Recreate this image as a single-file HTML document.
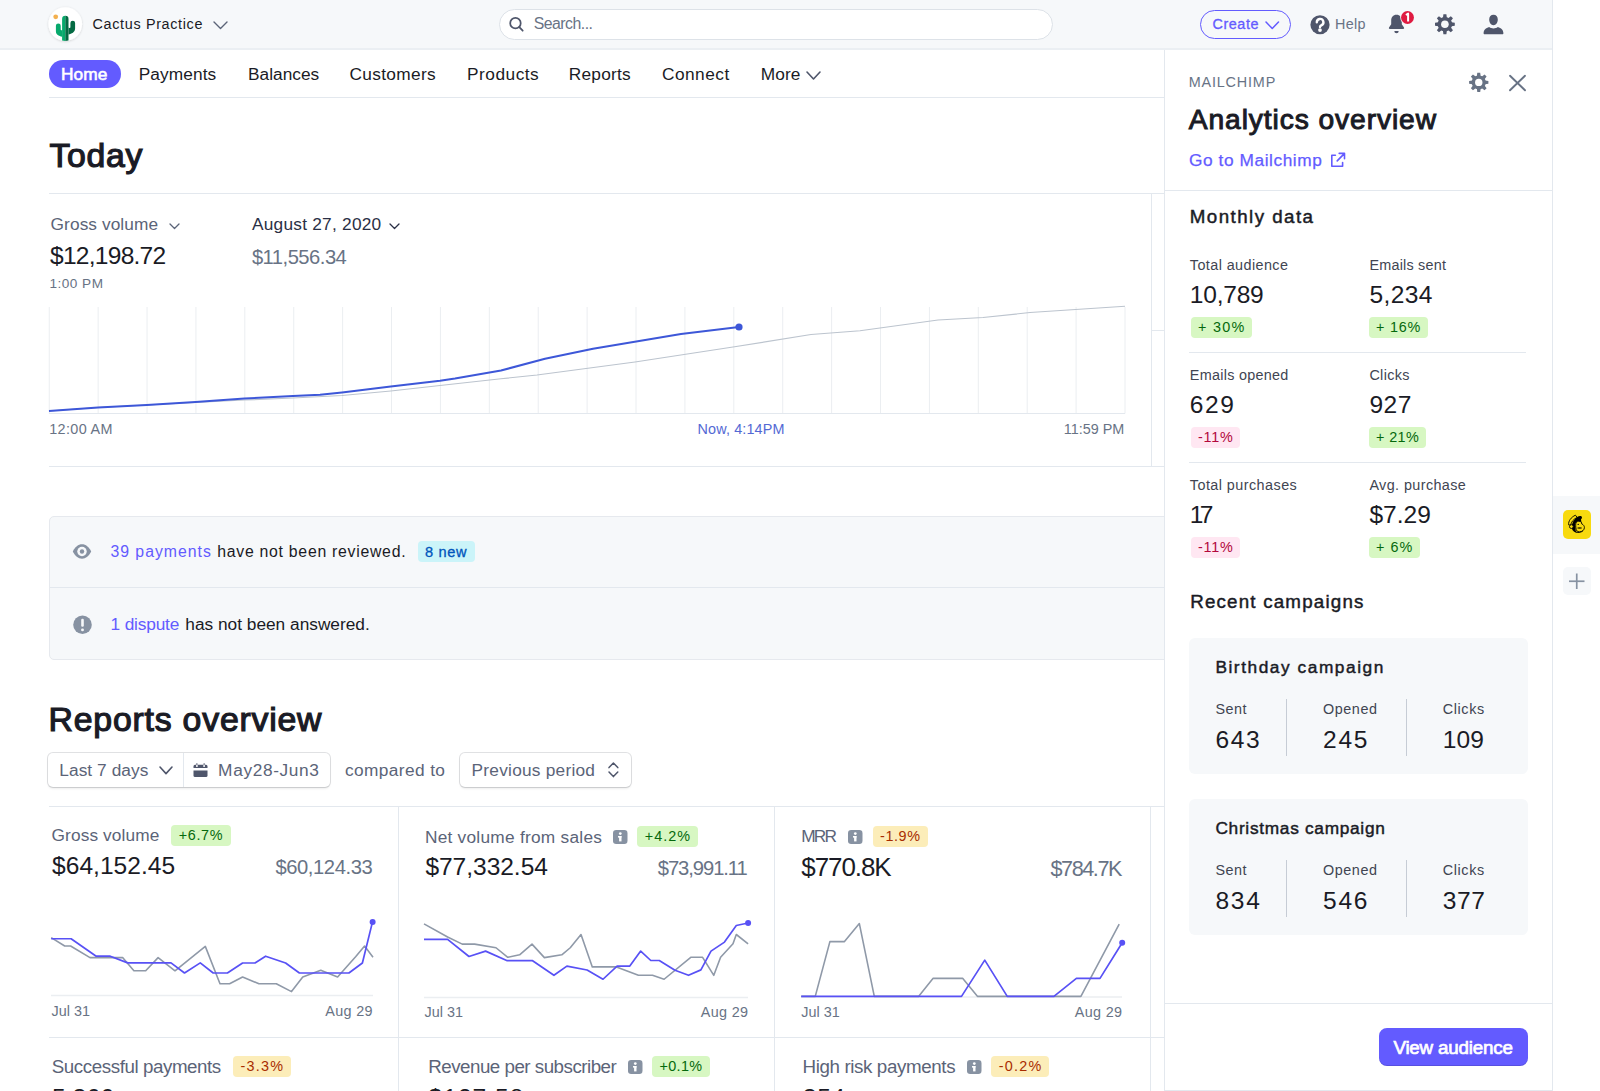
<!DOCTYPE html>
<html><head><meta charset="utf-8"><title>Stripe Dashboard</title>
<style>
html,body{margin:0;padding:0;width:1600px;height:1091px;overflow:hidden;background:#fff;}
body{position:relative;font-family:"Liberation Sans",sans-serif;}
.t{position:absolute;white-space:pre;}
.r{position:absolute;}
.a{position:absolute;overflow:visible;}
</style></head><body>
<div class="r" style="left:0px;top:0px;width:1552px;height:48px;background:#f6f8fa;"></div>
<div class="r" style="left:0px;top:48px;width:1552px;height:2px;background:#ebeff3;"></div>
<svg class="a" style="left:46px;top:5px" width="38" height="38" viewBox="0 0 38 38">
<defs><filter id="sh" x="-20%" y="-20%" width="140%" height="140%"><feDropShadow dx="0" dy="0.6" stdDeviation="0.9" flood-color="#000" flood-opacity="0.16"/></filter>
<clipPath id="cc"><circle cx="19.25" cy="19.05" r="16.85"/></clipPath></defs>
<circle cx="19.25" cy="19.05" r="16.85" fill="#fff" filter="url(#sh)"/>
<circle cx="9.7" cy="11.8" r="2.4" fill="#f3b04e"/>
<g clip-path="url(#cc)">
<path d="M16.1 38 V13.9 a3.2 3.2 0 0 1 3.2 -3.2 V38 Z" fill="#07a96c"/>
<path d="M9.9 20.8 a2.4 2.4 0 0 1 4.8 0 V24.6 a0.8 0.8 0 0 0 1.5 0.3 V31.8 C12.8 31 9.9 29.6 9.9 26.2 Z" fill="#07a96c"/>
<path d="M19.3 10.7 a3.2 3.2 0 0 1 3.2 3.2 V38 H19.3 Z" fill="#046a43"/>
<path d="M29.1 18.1 a2.35 2.35 0 0 0 -4.7 0 V21.9 a0.8 0.8 0 0 1 -1.9 0.3 V29.6 C25.6 28.6 29.1 27.2 29.1 23.4 Z" fill="#046a43"/>
</g>
</svg>
<div class="t" style="left:92.50px;top:16px;font-size:14.38px;line-height:16px;color:#1a1b25;letter-spacing:0.665px;">Cactus Practice</div>
<svg class="a" style="left:212px;top:20px" width="17" height="10.5"><polyline points="2,2 8.5,8.5 15,2" fill="none" stroke="#5b6478" stroke-width="1.4" stroke-linecap="round" stroke-linejoin="round"/></svg>
<div class="r" style="left:498.5px;top:8.5px;width:554.5px;height:31.5px;background:#fff;border:1px solid #dde2e8;border-radius:16px;box-sizing:border-box;"></div>
<svg class="a" style="left:507px;top:15px" width="18" height="18" viewBox="0 0 18 18"><circle cx="8.45" cy="8.2" r="5.25" fill="none" stroke="#4f566b" stroke-width="1.75"/><line x1="12.3" y1="12.1" x2="15.7" y2="15.7" stroke="#4f566b" stroke-width="1.75" stroke-linecap="round"/></svg>
<div class="t" style="left:533.75px;top:15px;font-size:15.84px;line-height:17px;color:#687385;letter-spacing:-0.518px;">Search...</div>
<div class="r" style="left:1200px;top:10px;width:91px;height:28.5px;border:1.3px solid #635bff;border-radius:15px;box-sizing:border-box;"></div>
<div class="t" style="left:1212.50px;top:16px;font-size:14.38px;line-height:16px;color:#635bff;letter-spacing:0.569px;-webkit-text-stroke:0.3px #635bff;">Create</div>
<svg class="a" style="left:1263.5px;top:20px" width="16.5" height="10.5"><polyline points="2,2 8.25,8.5 14.5,2" fill="none" stroke="#635bff" stroke-width="1.5" stroke-linecap="round" stroke-linejoin="round"/></svg>
<svg class="a" style="left:1310px;top:14.8px" width="20" height="20" viewBox="0 0 20 20"><circle cx="10" cy="9.75" r="9.6" fill="#4f566b"/>
<path d="M6.8 7.2 a3.3 3.3 0 1 1 4.9 2.9 c-1 0.55 -1.7 0.9 -1.7 1.9" fill="none" stroke="#fff" stroke-width="2.4" stroke-linecap="round"/><circle cx="10" cy="15.1" r="1.9" fill="#fff"/></svg>
<div class="t" style="left:1335.00px;top:16px;font-size:14.38px;line-height:16px;color:#687385;letter-spacing:0.340px;">Help</div>
<svg class="a" style="left:1388px;top:14px" width="17" height="21" viewBox="0 0 17 21">
<path d="M8.5 0.8 C5 0.8 3.2 3.3 3.2 6.5 V10.3 L1 13.6 a0.9 0.9 0 0 0 0.8 1.3 H15.2 a0.9 0.9 0 0 0 0.8 -1.3 L13.8 10.3 V6.5 C13.8 3.3 12 0.8 8.5 0.8Z" fill="#4f566b"/>
<path d="M6.3 17 H10.7 a2.2 2.2 0 0 1 -4.4 0Z" fill="#4f566b"/></svg>
<svg class="a" style="left:1400.15px;top:9.9px" width="15" height="15" viewBox="0 0 15 15"><circle cx="7.5" cy="7.5" r="7.3" fill="#f6f8fa"/><circle cx="7.5" cy="7.5" r="6.45" fill="#df1b41"/><path d="M5.9 5.0 L8.1 3.6 V11.6" fill="none" stroke="#fff" stroke-width="2.0" stroke-linejoin="round"/></svg>
<svg class="a" style="left:0;top:0" width="1600" height="200"><polygon points="1451.42,22.31 1454.79,22.76 1454.79,25.74 1451.42,26.19 1450.88,27.48 1452.95,30.18 1450.83,32.30 1448.13,30.23 1446.84,30.77 1446.39,34.14 1443.41,34.14 1442.96,30.77 1441.67,30.23 1438.97,32.30 1436.85,30.18 1438.92,27.48 1438.38,26.19 1435.01,25.74 1435.01,22.76 1438.38,22.31 1438.92,21.02 1436.85,18.32 1438.97,16.20 1441.67,18.27 1442.96,17.73 1443.41,14.36 1446.39,14.36 1446.84,17.73 1448.13,18.27 1450.83,16.20 1452.95,18.32 1450.88,21.02" fill="#4f566b"/><circle cx="1444.9" cy="24.25" r="7.199999999999999" fill="#4f566b"/><circle cx="1444.9" cy="24.25" r="3.8" fill="#f6f8fa"/></svg>
<svg class="a" style="left:1483px;top:14px" width="21" height="21" viewBox="0 0 21 21">
<path d="M10.5 0.8 c2.6 0 4.3 2 4.3 4.8 c0 2.9 -1.6 5.6 -4.3 5.6 c-2.7 0 -4.3 -2.7 -4.3 -5.6 c0 -2.8 1.7 -4.8 4.3 -4.8Z" fill="#4f566b"/>
<path d="M0.6 19.2 c0 -3.4 2.2 -5.2 5.6 -6.2 c1.2 1 2.6 1.4 4.3 1.4 c1.7 0 3.1 -0.4 4.3 -1.4 c3.4 1 5.6 2.8 5.6 6.2 c0 0.6 -0.4 1 -1 1 H1.6 c-0.6 0 -1 -0.4 -1 -1Z" fill="#4f566b"/></svg>
<div class="r" style="left:1552px;top:0px;width:1px;height:1091px;background:#e3e8ee;"></div>
<div class="r" style="left:1553px;top:496px;width:47px;height:58px;background:#f6f8fa;"></div>
<div class="r" style="left:1562.6px;top:510.3px;width:28.700000000000045px;height:28.900000000000034px;background:#f8da0f;border-radius:5px;"></div>
<svg class="a" style="left:1560px;top:508px" width="34" height="34" viewBox="0 0 34 34">
<path d="M8.6 16.8 C8.2 13.2 11 9.2 15.4 7.2 L17.2 9.4 C13.6 11 11.2 14 10.6 17.2 Z" fill="#f8da0f" stroke="#000" stroke-width="0.9" stroke-linejoin="round"/>
<path d="M17 9.3 C18.5 8.2 20.2 7.8 21.6 8.4 C22.4 9.4 21.9 10.6 21 11.2 L21.4 14.4 C19 12.8 16.6 13.4 15.6 15.2 C15 17.4 15.8 19 15.6 20.6 C15.2 22.6 16 23.6 17.2 24.2 C19.2 24.2 21.6 23.6 23.6 21.6 L22.6 23.6 C21 24.8 19 25.2 17.4 25 C14.8 24.6 12.4 22.6 12 21 C11.4 18 12 14 14.6 11.4 Z" fill="#000"/>
<path d="M16 14.6 C17.6 12.9 20 12.9 21.4 14.2 L21.8 16 C23.4 16.6 24.4 18 24.4 19.6 C24.4 22 22 23.8 19.6 23.8 C17.2 23.8 15.9 22.4 16.1 20.6 C15.6 19.4 15.6 16 16 14.6Z" fill="#f8da0f" stroke="#000" stroke-width="0.9"/>
<circle cx="18.2" cy="16.4" r="0.7" fill="#000"/>
<ellipse cx="19.6" cy="20" rx="2.4" ry="1.1" fill="#5a4d00"/>
<circle cx="11.4" cy="18.6" r="1.9" fill="#f8da0f" stroke="#000" stroke-width="0.9"/>
</svg>
<div class="r" style="left:1562.5px;top:566.5px;width:28.5px;height:28.5px;background:#f6f8fa;border-radius:5px;"></div>
<svg class="a" style="left:1562.5px;top:566.5px" width="28.5" height="28.5"><line x1="6" y1="14.25" x2="21.5" y2="14.25" stroke="#8792a2" stroke-width="1.7"/><line x1="13.75" y1="6.5" x2="13.75" y2="22" stroke="#8792a2" stroke-width="1.7"/></svg>
<div class="r" style="left:48.75px;top:97px;width:1115.25px;height:1px;background:#e3e8ee;"></div>
<div class="r" style="left:49px;top:59.5px;width:72px;height:28.5px;background:#635bff;border-radius:14.25px;"></div>
<div class="t" style="left:61.00px;top:64px;font-size:17.29px;line-height:20px;color:#fff;letter-spacing:0.123px;-webkit-text-stroke:0.6px #fff;">Home</div>
<div class="t" style="left:138.75px;top:64px;font-size:17.29px;line-height:20px;color:#1a1b25;letter-spacing:0.090px;">Payments</div>
<div class="t" style="left:248.00px;top:64px;font-size:17.29px;line-height:20px;color:#1a1b25;letter-spacing:0.017px;">Balances</div>
<div class="t" style="left:349.50px;top:64px;font-size:17.29px;line-height:20px;color:#1a1b25;letter-spacing:0.332px;">Customers</div>
<div class="t" style="left:467.00px;top:64px;font-size:17.29px;line-height:20px;color:#1a1b25;letter-spacing:0.503px;">Products</div>
<div class="t" style="left:568.75px;top:64px;font-size:17.29px;line-height:20px;color:#1a1b25;letter-spacing:0.245px;">Reports</div>
<div class="t" style="left:662.00px;top:64px;font-size:17.29px;line-height:20px;color:#1a1b25;letter-spacing:0.474px;">Connect</div>
<div class="t" style="left:760.75px;top:64px;font-size:17.29px;line-height:20px;color:#1a1b25;letter-spacing:0.121px;">More</div>
<svg class="a" style="left:804.5px;top:69.5px" width="17.0" height="11.0"><polyline points="2,2 8.5,9.0 15.0,2" fill="none" stroke="#4f566b" stroke-width="1.6" stroke-linecap="round" stroke-linejoin="round"/></svg>
<div class="t" style="left:49.40px;top:136px;font-size:33.8px;line-height:38px;color:#1a1b25;letter-spacing:0.730px;-webkit-text-stroke:1.2px #1a1b25;">Today</div>
<div class="r" style="left:48.5px;top:193px;width:1115.5px;height:1px;background:#e3e8ee;"></div>
<div class="r" style="left:1151px;top:193px;width:1px;height:273px;background:#e3e8ee;"></div>
<div class="r" style="left:1151px;top:330px;width:13px;height:1px;background:#e3e8ee;"></div>
<div class="t" style="left:50.60px;top:214px;font-size:17.29px;line-height:20px;color:#5b6478;letter-spacing:0.078px;">Gross volume</div>
<svg class="a" style="left:167.5px;top:221.5px" width="13.0" height="8.5"><polyline points="2,2 6.5,6.5 11.0,2" fill="none" stroke="#5b6478" stroke-width="1.3" stroke-linecap="round" stroke-linejoin="round"/></svg>
<div class="t" style="left:50.00px;top:242px;font-size:24.56px;line-height:27px;color:#1a1b25;letter-spacing:-0.741px;">$12,198.72</div>
<div class="t" style="left:49.40px;top:276px;font-size:13.6px;line-height:15px;color:#687385;letter-spacing:0.492px;">1:00 PM</div>
<div class="t" style="left:251.90px;top:214px;font-size:17.29px;line-height:20px;color:#2a2f45;letter-spacing:0.247px;">August 27, 2020</div>
<svg class="a" style="left:388.2px;top:221.5px" width="13.0" height="8.5"><polyline points="2,2 6.5,6.5 11.0,2" fill="none" stroke="#2a2f45" stroke-width="1.3" stroke-linecap="round" stroke-linejoin="round"/></svg>
<div class="t" style="left:251.90px;top:246px;font-size:20.2px;line-height:22px;color:#687385;letter-spacing:-0.512px;">$11,556.34</div>
<svg class="a" style="left:0;top:0" width="1200" height="500"><line x1="49.25" y1="307" x2="49.25" y2="413.5" stroke="#ebeef1" stroke-width="1"/><line x1="98.15" y1="307" x2="98.15" y2="413.5" stroke="#ebeef1" stroke-width="1"/><line x1="147.05" y1="307" x2="147.05" y2="413.5" stroke="#ebeef1" stroke-width="1"/><line x1="195.94" y1="307" x2="195.94" y2="413.5" stroke="#ebeef1" stroke-width="1"/><line x1="244.84" y1="307" x2="244.84" y2="413.5" stroke="#ebeef1" stroke-width="1"/><line x1="293.74" y1="307" x2="293.74" y2="413.5" stroke="#ebeef1" stroke-width="1"/><line x1="342.64" y1="307" x2="342.64" y2="413.5" stroke="#ebeef1" stroke-width="1"/><line x1="391.53" y1="307" x2="391.53" y2="413.5" stroke="#ebeef1" stroke-width="1"/><line x1="440.43" y1="307" x2="440.43" y2="413.5" stroke="#ebeef1" stroke-width="1"/><line x1="489.33" y1="307" x2="489.33" y2="413.5" stroke="#ebeef1" stroke-width="1"/><line x1="538.23" y1="307" x2="538.23" y2="413.5" stroke="#ebeef1" stroke-width="1"/><line x1="587.12" y1="307" x2="587.12" y2="413.5" stroke="#ebeef1" stroke-width="1"/><line x1="636.02" y1="307" x2="636.02" y2="413.5" stroke="#ebeef1" stroke-width="1"/><line x1="684.92" y1="307" x2="684.92" y2="413.5" stroke="#ebeef1" stroke-width="1"/><line x1="733.82" y1="307" x2="733.82" y2="413.5" stroke="#ebeef1" stroke-width="1"/><line x1="782.72" y1="307" x2="782.72" y2="413.5" stroke="#ebeef1" stroke-width="1"/><line x1="831.61" y1="307" x2="831.61" y2="413.5" stroke="#ebeef1" stroke-width="1"/><line x1="880.51" y1="307" x2="880.51" y2="413.5" stroke="#ebeef1" stroke-width="1"/><line x1="929.41" y1="307" x2="929.41" y2="413.5" stroke="#ebeef1" stroke-width="1"/><line x1="978.31" y1="307" x2="978.31" y2="413.5" stroke="#ebeef1" stroke-width="1"/><line x1="1027.20" y1="307" x2="1027.20" y2="413.5" stroke="#ebeef1" stroke-width="1"/><line x1="1076.10" y1="307" x2="1076.10" y2="413.5" stroke="#ebeef1" stroke-width="1"/><line x1="1125.00" y1="307" x2="1125.00" y2="413.5" stroke="#ebeef1" stroke-width="1"/>
<line x1="49" y1="413.5" x2="1125" y2="413.5" stroke="#e3e8ee" stroke-width="1"/>
<polyline points="49,411 98,407.5 146.75,405 195.5,402.5 244.5,400 293,398 342,395.5 390.75,391 440,385.5 501,378.75 537,375 635,362 733,347 811,334.5 860,330.75 938,320 983,317.5 1030,312.5 1125,306.25" fill="none" stroke="#bcc4ce" stroke-width="1.2"/>
<polyline points="49,411 98,407.5 146.75,405 195.5,402 244.5,398.5 293,396 320,394.8 342,392.5 390.75,386.5 440,380.75 455,378.5 501,370.5 545,358.75 593,348.75 681,334 739,327" fill="none" stroke="#3d57d8" stroke-width="2" stroke-linejoin="round"/>
<circle cx="739" cy="327" r="3.6" fill="#3d57d8"/></svg>
<div class="t" style="left:49.25px;top:421px;font-size:14.38px;line-height:16px;color:#687385;letter-spacing:0.356px;">12:00 AM</div>
<div class="t" style="left:697.50px;top:421px;font-size:14.38px;line-height:16px;color:#5469d4;letter-spacing:0.148px;">Now, 4:14PM</div>
<div class="t" style="left:1063.75px;top:421px;font-size:14.38px;line-height:16px;color:#687385;">11:59 PM</div>
<div class="r" style="left:48.5px;top:466px;width:1115.5px;height:1px;background:#e3e8ee;"></div>
<div class="r" style="left:48.5px;top:515.5px;width:1251.5px;height:144.5px;background:#f6f8fa;border:1px solid #e6e9ee;border-radius:5px;box-sizing:border-box;"></div>
<div class="r" style="left:49.5px;top:587px;width:1250.5px;height:1px;background:#e3e8ee;"></div>
<svg class="a" style="left:72px;top:543px" width="20" height="17" viewBox="0 0 20 17">
<path d="M0.8 8.5 C3 4 6.2 1.3 10 1.3 C13.8 1.3 17 4 19.2 8.5 C17 13 13.8 15.7 10 15.7 C6.2 15.7 3 13 0.8 8.5Z" fill="#8792a2"/>
<circle cx="10" cy="8.5" r="4.75" fill="#f6f8fa"/><circle cx="10" cy="8.5" r="2.2" fill="#8792a2"/></svg>
<div class="t" style="left:110.40px;top:543px;font-size:15.84px;line-height:17px;color:#635bff;letter-spacing:0.990px;">39 payments</div>
<div class="t" style="left:217.25px;top:543px;font-size:15.84px;line-height:17px;color:#1a1b25;letter-spacing:0.720px;">have not been reviewed.</div>
<div class="r" style="left:418px;top:541px;width:56.69999999999999px;height:21px;background:#cbf4f9;border-radius:4px;"></div>
<div class="t" style="left:425.00px;top:544px;font-size:14.6px;line-height:16px;color:#0055bc;letter-spacing:0.651px;-webkit-text-stroke:0.3px #0055bc;">8 new</div>
<svg class="a" style="left:72.5px;top:614.5px" width="19" height="19.5" viewBox="0 0 19 19.5"><circle cx="9.5" cy="9.75" r="9.3" fill="#8792a2"/>
<rect x="8.2" y="3.8" width="2.6" height="8" rx="1.1" fill="#f6f8fa"/><circle cx="9.5" cy="14.9" r="1.45" fill="#f6f8fa"/></svg>
<div class="t" style="left:110.60px;top:614px;font-size:17.29px;line-height:20px;color:#635bff;letter-spacing:-0.173px;">1 dispute</div>
<div class="t" style="left:185.30px;top:614px;font-size:17.29px;line-height:20px;color:#1a1b25;">has not been answered.</div>
<div class="t" style="left:48.60px;top:700px;font-size:33.8px;line-height:38px;color:#1a1b25;letter-spacing:0.786px;-webkit-text-stroke:1.2px #1a1b25;">Reports overview</div>
<div class="r" style="left:48px;top:752.8px;width:282.25px;height:34.30000000000007px;background:#fff;border-radius:5px;box-shadow:0 0 0 1px rgba(64,68,82,0.16),0 2px 3px -1px rgba(0,0,0,0.14);"></div>
<div class="r" style="left:182.5px;top:753px;width:1.0px;height:34px;background:#e3e8ee;"></div>
<div class="t" style="left:59.30px;top:760px;font-size:17.29px;line-height:20px;color:#5b6478;letter-spacing:0.068px;">Last 7 days</div>
<svg class="a" style="left:158px;top:765.2px" width="16" height="10.599999999999909"><polyline points="2,2 8.0,8.599999999999909 14,2" fill="none" stroke="#4f566b" stroke-width="1.6" stroke-linecap="round" stroke-linejoin="round"/></svg>
<svg class="a" style="left:192.5px;top:762.5px" width="15" height="15" viewBox="0 0 15 15">
<path d="M0.5 5.1 V3.3 a1.5 1.5 0 0 1 1.5 -1.5 H13 a1.5 1.5 0 0 1 1.5 1.5 V5.1 Z" fill="#4f566b"/>
<path d="M0.5 7.5 H14.5 V12.6 a1.5 1.5 0 0 1 -1.5 1.5 H2 a1.5 1.5 0 0 1 -1.5 -1.5 Z" fill="#4f566b"/>
<circle cx="3.9" cy="3" r="0.95" fill="#fff"/><circle cx="11.1" cy="3" r="0.95" fill="#fff"/>
<circle cx="3.9" cy="0.9" r="0.75" fill="#4f566b"/><circle cx="11.1" cy="0.9" r="0.75" fill="#4f566b"/></svg>
<div class="t" style="left:218.10px;top:760px;font-size:17.29px;line-height:20px;color:#5b6478;letter-spacing:0.639px;">May28-Jun3</div>
<div class="t" style="left:345.00px;top:760px;font-size:17.29px;line-height:20px;color:#5b6478;letter-spacing:0.388px;">compared to</div>
<div class="r" style="left:460px;top:752.5px;width:170.60000000000002px;height:34.5px;background:#fff;border-radius:5px;box-shadow:0 0 0 1px rgba(64,68,82,0.16),0 2px 3px -1px rgba(0,0,0,0.14);"></div>
<div class="t" style="left:471.60px;top:760px;font-size:17.29px;line-height:20px;color:#5b6478;letter-spacing:0.234px;">Previous period</div>
<svg class="a" style="left:606px;top:761px" width="15" height="18"><polyline points="3,6.6 7.4,2.1 11.8,6.6" fill="none" stroke="#4f566b" stroke-width="1.5" stroke-linecap="round" stroke-linejoin="round"/><polyline points="3,11.1 7.4,15.6 11.8,11.1" fill="none" stroke="#4f566b" stroke-width="1.5" stroke-linecap="round" stroke-linejoin="round"/></svg>
<div class="r" style="left:48.75px;top:806px;width:1115.25px;height:1px;background:#e3e8ee;"></div>
<div class="r" style="left:48.75px;top:1037px;width:1115.25px;height:1px;background:#e3e8ee;"></div>
<div class="r" style="left:398px;top:807px;width:1px;height:284px;background:#e3e8ee;"></div>
<div class="r" style="left:774px;top:807px;width:1px;height:284px;background:#e3e8ee;"></div>
<div class="r" style="left:1150px;top:807px;width:1px;height:284px;background:#e3e8ee;"></div>
<div class="t" style="left:51.50px;top:825px;font-size:17.29px;line-height:20px;color:#5b6478;letter-spacing:0.114px;">Gross volume</div>
<div class="r" style="left:171px;top:824.5px;width:60.25px;height:21.0px;background:#d7f7c2;border-radius:4px;"></div>
<div class="t" style="left:178.75px;top:827px;font-size:14.38px;line-height:16px;color:#05690d;letter-spacing:0.645px;">+6.7%</div>
<div class="t" style="left:52.00px;top:852px;font-size:24.56px;line-height:27px;color:#1a1b25;letter-spacing:0.036px;">$64,152.45</div>
<div class="t" style="left:275.40px;top:856px;font-size:20.2px;line-height:22px;color:#687385;letter-spacing:-0.417px;">$60,124.33</div>
<div class="t" style="left:424.90px;top:827px;font-size:17.29px;line-height:20px;color:#5b6478;letter-spacing:0.255px;">Net volume from sales</div>
<svg class="a" style="left:612.8px;top:829.8px" width="14.5" height="14" viewBox="0 0 14.5 14"><rect x="0" y="0" width="14.5" height="14" rx="3.2" fill="#8792a2"/><rect x="6.1" y="6" width="2.4" height="5.4" fill="#fff"/><rect x="5" y="6" width="3.5" height="1.6" fill="#fff"/><circle cx="7.3" cy="3.6" r="1.35" fill="#fff"/></svg>
<div class="r" style="left:637.35px;top:825.75px;width:60.299999999999955px;height:21.350000000000023px;background:#d7f7c2;border-radius:4px;"></div>
<div class="t" style="left:644.85px;top:828px;font-size:14.38px;line-height:16px;color:#05690d;letter-spacing:1.033px;">+4.2%</div>
<div class="t" style="left:425.40px;top:853px;font-size:24.56px;line-height:27px;color:#1a1b25;letter-spacing:-0.036px;">$77,332.54</div>
<div class="t" style="left:657.80px;top:857px;font-size:20.2px;line-height:22px;color:#687385;letter-spacing:-1.067px;">$73,991.11</div>
<div class="t" style="left:801.25px;top:826px;font-size:17.29px;line-height:20px;color:#5b6478;letter-spacing:-1.810px;">MRR</div>
<svg class="a" style="left:848px;top:830px" width="14.5" height="14" viewBox="0 0 14.5 14"><rect x="0" y="0" width="14.5" height="14" rx="3.2" fill="#8792a2"/><rect x="6.1" y="6" width="2.4" height="5.4" fill="#fff"/><rect x="5" y="6" width="3.5" height="1.6" fill="#fff"/><circle cx="7.3" cy="3.6" r="1.35" fill="#fff"/></svg>
<div class="r" style="left:872.5px;top:825.75px;width:55.0px;height:21.25px;background:#fcedb9;border-radius:4px;"></div>
<div class="t" style="left:880.00px;top:828px;font-size:14.38px;line-height:16px;color:#a82c00;letter-spacing:0.610px;">-1.9%</div>
<div class="t" style="left:801.25px;top:852px;font-size:26.01px;line-height:30px;color:#1a1b25;letter-spacing:-1.069px;">$770.8K</div>
<div class="t" style="left:1050.50px;top:856px;font-size:21.65px;line-height:25px;color:#687385;letter-spacing:-1.445px;">$784.7K</div>
<svg class="a" style="left:0;top:0" width="1200" height="1091">
<line x1="51" y1="995.5" x2="373" y2="995.5" stroke="#ebeef1" stroke-width="1.3"/>
<line x1="424" y1="997.5" x2="748" y2="997.5" stroke="#ebeef1" stroke-width="1.3"/>
<line x1="801" y1="997" x2="1122" y2="997" stroke="#ebeef1" stroke-width="1.3"/>
<polyline points="51.2,937.6 64.7,946 70.6,946 90,957.6 122.6,957.6 133.9,970.8 145.7,970.8 158.1,957.6 175,970.8 205.3,946.4 220,983.75 229.6,983.75 242.6,977 258.9,983.75 276.3,983.75 291.5,991.6 302.75,977 320.75,970.25 337.6,977 355.6,956.75 364.6,946 373,957.3" fill="none" stroke="#8f99a8" stroke-width="1.6" stroke-linejoin="round"/>
<polyline points="51.2,938.75 71.1,938.75 96.2,956.2 110.25,956.2 127.7,962.9 171,962.9 184.5,973 200.25,962.9 213.2,973 227.4,973 242.6,963 255,963 265.6,956.2 285.6,963 299.4,973 348.9,973 362.4,963 372.5,921.9" fill="none" stroke="#5851f5" stroke-width="1.7" stroke-linejoin="round"/>
<circle cx="372.6" cy="921.9" r="3" fill="#5851f5"/>
<polyline points="424,923.9 447.6,937 462.25,944.15 474.6,944.15 496,947.75 507.8,957.3 519.6,954.8 532,944.15 544.4,957.65 561.8,954.8 570.25,947.75 581,934.5 592.3,966.9 616.5,966.9 638.4,975.3 652.5,975.3 664.1,979.25 690.75,957.3 702.6,957.3 713.8,975.3 720.6,957.3 733,943.8 736.3,934.5 748.1,943.8" fill="none" stroke="#8f99a8" stroke-width="1.6" stroke-linejoin="round"/>
<polyline points="424,939.3 447.6,939.3 469,956.5 485.6,951.1 507.25,960.7 532.6,960.7 553.9,975.3 566.9,966.1 587.1,970 603,979.25 617.1,966.1 629.8,966.1 640.7,951.1 650.8,960.5 659.25,960.5 675,970.25 688.5,975.3 700.9,969.9 711,951.1 724.5,942.1 736.3,925.5 748.1,923" fill="none" stroke="#5851f5" stroke-width="1.7" stroke-linejoin="round"/>
<circle cx="748.1" cy="923" r="3" fill="#5851f5"/>
<polyline points="801.2,996.35 815.25,996.35 829.9,941.6 844.5,941.6 859.35,923.6 874.3,996.35 918.75,996.35 933.15,978.35 962.6,978.35 977.4,996.35 1080.9,996.35 1119.2,924.1" fill="none" stroke="#8f99a8" stroke-width="1.6" stroke-linejoin="round"/>
<polyline points="801.2,996.35 961.5,996.35 984.75,960.1 1007.25,996.35 1053.9,996.35 1076.4,978.35 1100,978.35 1122.2,942.7" fill="none" stroke="#5851f5" stroke-width="1.7" stroke-linejoin="round"/>
<circle cx="1122.2" cy="942.7" r="3" fill="#5851f5"/>
</svg>
<div class="t" style="left:51.50px;top:1003px;font-size:14.38px;line-height:16px;color:#687385;letter-spacing:0.027px;">Jul 31</div>
<div class="t" style="left:325.25px;top:1003px;font-size:14.38px;line-height:16px;color:#687385;letter-spacing:0.336px;">Aug 29</div>
<div class="t" style="left:424.60px;top:1004px;font-size:14.38px;line-height:16px;color:#687385;letter-spacing:0.027px;">Jul 31</div>
<div class="t" style="left:700.85px;top:1004px;font-size:14.38px;line-height:16px;color:#687385;letter-spacing:0.336px;">Aug 29</div>
<div class="t" style="left:801.20px;top:1004px;font-size:14.38px;line-height:16px;color:#687385;letter-spacing:0.027px;">Jul 31</div>
<div class="t" style="left:1074.75px;top:1004px;font-size:14.38px;line-height:16px;color:#687385;letter-spacing:0.336px;">Aug 29</div>
<div class="t" style="left:51.75px;top:1056px;font-size:18.75px;line-height:21px;color:#5b6478;letter-spacing:-0.426px;">Successful payments</div>
<div class="r" style="left:233px;top:1056.25px;width:57.5px;height:20.75px;background:#fcedb9;border-radius:4px;"></div>
<div class="t" style="left:240.50px;top:1058px;font-size:14.38px;line-height:16px;color:#a82c00;letter-spacing:1.235px;">-3.3%</div>
<div class="t" style="left:52.00px;top:1084px;font-size:24.56px;line-height:27px;color:#1a1b25;letter-spacing:0.138px;">5,366</div>
<div class="t" style="left:428.25px;top:1056px;font-size:18.75px;line-height:21px;color:#5b6478;letter-spacing:-0.503px;">Revenue per subscriber</div>
<svg class="a" style="left:627.5px;top:1059.5px" width="14.5" height="14" viewBox="0 0 14.5 14"><rect x="0" y="0" width="14.5" height="14" rx="3.2" fill="#8792a2"/><rect x="6.1" y="6" width="2.4" height="5.4" fill="#fff"/><rect x="5" y="6" width="3.5" height="1.6" fill="#fff"/><circle cx="7.3" cy="3.6" r="1.35" fill="#fff"/></svg>
<div class="r" style="left:652px;top:1056.25px;width:57.5px;height:20.75px;background:#d7f7c2;border-radius:4px;"></div>
<div class="t" style="left:659.50px;top:1058px;font-size:14.38px;line-height:16px;color:#05690d;letter-spacing:0.333px;">+0.1%</div>
<div class="t" style="left:428.50px;top:1084px;font-size:24.56px;line-height:27px;color:#1a1b25;letter-spacing:1.036px;">$127.58</div>
<div class="t" style="left:748.00px;top:1088px;font-size:20.2px;line-height:22px;color:#687385;letter-spacing:-2.170px;">$128.20</div>
<div class="t" style="left:802.50px;top:1056px;font-size:18.75px;line-height:21px;color:#5b6478;letter-spacing:-0.378px;">High risk payments</div>
<svg class="a" style="left:966.75px;top:1059.5px" width="14.5" height="14" viewBox="0 0 14.5 14"><rect x="0" y="0" width="14.5" height="14" rx="3.2" fill="#8792a2"/><rect x="6.1" y="6" width="2.4" height="5.4" fill="#fff"/><rect x="5" y="6" width="3.5" height="1.6" fill="#fff"/><circle cx="7.3" cy="3.6" r="1.35" fill="#fff"/></svg>
<div class="r" style="left:991.25px;top:1056.25px;width:57.5px;height:20.75px;background:#fcedb9;border-radius:4px;"></div>
<div class="t" style="left:998.75px;top:1058px;font-size:14.38px;line-height:16px;color:#a82c00;letter-spacing:1.235px;">-0.2%</div>
<div class="t" style="left:803.00px;top:1084px;font-size:24.56px;line-height:27px;color:#1a1b25;letter-spacing:0.517px;">354</div>
<div class="r" style="left:1164px;top:50px;width:388px;height:1041px;background:#fff;border-left:1px solid #e3e8ee;box-sizing:border-box;"></div>
<div class="t" style="left:1188.75px;top:74px;font-size:14.38px;line-height:16px;color:#687385;letter-spacing:0.826px;">MAILCHIMP</div>
<svg class="a" style="left:0;top:0" width="1600" height="200"><polygon points="1485.10,80.50 1488.39,80.94 1488.39,83.86 1485.10,84.30 1484.58,85.55 1486.60,88.19 1484.54,90.25 1481.90,88.23 1480.65,88.75 1480.21,92.04 1477.29,92.04 1476.85,88.75 1475.60,88.23 1472.96,90.25 1470.90,88.19 1472.92,85.55 1472.40,84.30 1469.11,83.86 1469.11,80.94 1472.40,80.50 1472.92,79.25 1470.90,76.61 1472.96,74.55 1475.60,76.57 1476.85,76.05 1477.29,72.76 1480.21,72.76 1480.65,76.05 1481.90,76.57 1484.54,74.55 1486.60,76.61 1484.58,79.25" fill="#687385"/><circle cx="1478.75" cy="82.4" r="7.02" fill="#687385"/><circle cx="1478.75" cy="82.4" r="3.705" fill="#fff"/></svg>
<svg class="a" style="left:1508px;top:73.5px" width="19" height="18"><line x1="2" y1="1.8" x2="17" y2="16.3" stroke="#687385" stroke-width="1.9" stroke-linecap="round"/><line x1="17" y1="1.8" x2="2" y2="16.3" stroke="#687385" stroke-width="1.9" stroke-linecap="round"/></svg>
<div class="t" style="left:1188.75px;top:103px;font-size:28.2px;line-height:32px;color:#1a1b25;letter-spacing:0.910px;-webkit-text-stroke:1.0px #1a1b25;">Analytics overview</div>
<div class="t" style="left:1189.00px;top:150px;font-size:17.29px;line-height:20px;color:#635bff;letter-spacing:0.570px;-webkit-text-stroke:0.25px #635bff;">Go to Mailchimp</div>
<svg class="a" style="left:1326px;top:148px" width="24" height="24"><path d="M9.4 7.3 H5.8 V18.2 H16.6 V14.5" fill="none" stroke="#635bff" stroke-width="1.6" stroke-linecap="round" stroke-linejoin="round"/><path d="M13.2 5.4 H18.5 V10.8 M18.3 5.6 L11.2 12.9" fill="none" stroke="#635bff" stroke-width="1.6" stroke-linecap="round" stroke-linejoin="round"/></svg>
<div class="r" style="left:1165px;top:190px;width:387px;height:1px;background:#e3e8ee;"></div>
<div class="t" style="left:1189.80px;top:206px;font-size:18.75px;line-height:21px;color:#1a1b25;letter-spacing:1.440px;-webkit-text-stroke:0.45px #1a1b25;">Monthly data</div>
<div class="t" style="left:1189.80px;top:257px;font-size:14.38px;line-height:16px;color:#414552;letter-spacing:0.420px;">Total audience</div>
<div class="t" style="left:1189.80px;top:281px;font-size:24.56px;line-height:27px;color:#1a1b25;letter-spacing:-0.226px;">10,789</div>
<div class="r" style="left:1190.5px;top:316.7px;width:61.200000000000045px;height:20.900000000000034px;background:#d7f7c2;border-radius:4px;"></div>
<div class="t" style="left:1198.00px;top:319px;font-size:14.38px;line-height:16px;color:#05690d;letter-spacing:1.258px;">+ 30%</div>
<div class="t" style="left:1369.40px;top:257px;font-size:14.38px;line-height:16px;color:#414552;letter-spacing:0.228px;">Emails sent</div>
<div class="t" style="left:1369.40px;top:281px;font-size:24.56px;line-height:27px;color:#1a1b25;letter-spacing:0.388px;">5,234</div>
<div class="r" style="left:1368.5px;top:316.7px;width:59.25px;height:20.900000000000034px;background:#d7f7c2;border-radius:4px;"></div>
<div class="t" style="left:1376.00px;top:319px;font-size:14.38px;line-height:16px;color:#05690d;letter-spacing:0.770px;">+ 16%</div>
<div class="r" style="left:1189px;top:352.0px;width:337px;height:1.0px;background:#e3e8ee;"></div>
<div class="t" style="left:1189.80px;top:367px;font-size:14.38px;line-height:16px;color:#414552;letter-spacing:0.281px;">Emails opened</div>
<div class="t" style="left:1189.80px;top:391px;font-size:24.56px;line-height:27px;color:#1a1b25;letter-spacing:1.517px;">629</div>
<div class="r" style="left:1190.5px;top:426.9px;width:49.799999999999955px;height:20.900000000000034px;background:#ffe7f2;border-radius:4px;"></div>
<div class="t" style="left:1198.00px;top:429px;font-size:14.38px;line-height:16px;color:#b3093c;letter-spacing:0.767px;">-11%</div>
<div class="t" style="left:1369.40px;top:367px;font-size:14.38px;line-height:16px;color:#414552;letter-spacing:0.330px;">Clicks</div>
<div class="t" style="left:1369.40px;top:391px;font-size:24.56px;line-height:27px;color:#1a1b25;letter-spacing:0.517px;">927</div>
<div class="r" style="left:1368.5px;top:426.9px;width:57.700000000000045px;height:20.900000000000034px;background:#d7f7c2;border-radius:4px;"></div>
<div class="t" style="left:1376.00px;top:429px;font-size:14.38px;line-height:16px;color:#05690d;letter-spacing:0.383px;">+ 21%</div>
<div class="r" style="left:1189px;top:462.2px;width:337px;height:1.0px;background:#e3e8ee;"></div>
<div class="t" style="left:1189.80px;top:477px;font-size:14.38px;line-height:16px;color:#414552;letter-spacing:0.449px;">Total purchases</div>
<div class="t" style="left:1189.80px;top:501px;font-size:24.56px;line-height:27px;color:#1a1b25;letter-spacing:-3.811px;">17</div>
<div class="r" style="left:1190.5px;top:537.1px;width:49.799999999999955px;height:20.899999999999977px;background:#ffe7f2;border-radius:4px;"></div>
<div class="t" style="left:1198.00px;top:539px;font-size:14.38px;line-height:16px;color:#b3093c;letter-spacing:0.767px;">-11%</div>
<div class="t" style="left:1369.40px;top:477px;font-size:14.38px;line-height:16px;color:#414552;letter-spacing:0.402px;">Avg. purchase</div>
<div class="t" style="left:1369.40px;top:501px;font-size:24.56px;line-height:27px;color:#1a1b25;letter-spacing:0.013px;">$7.29</div>
<div class="r" style="left:1368.5px;top:537.1px;width:51.40000000000009px;height:20.899999999999977px;background:#d7f7c2;border-radius:4px;"></div>
<div class="t" style="left:1376.00px;top:539px;font-size:14.38px;line-height:16px;color:#05690d;letter-spacing:1.075px;">+ 6%</div>
<div class="t" style="left:1190.20px;top:591px;font-size:18.75px;line-height:21px;color:#1a1b25;letter-spacing:1.194px;-webkit-text-stroke:0.45px #1a1b25;">Recent campaigns</div>
<div class="r" style="left:1189.2px;top:638.3px;width:339.0999999999999px;height:135.30000000000007px;background:#f6f8fa;border-radius:6px;"></div>
<div class="t" style="left:1215.40px;top:657px;font-size:17.29px;line-height:20px;color:#1a1b25;letter-spacing:1.550px;-webkit-text-stroke:0.45px #1a1b25;">Birthday campaign</div>
<div class="t" style="left:1215.40px;top:701px;font-size:14.38px;line-height:16px;color:#414552;letter-spacing:0.473px;">Sent</div>
<div class="t" style="left:1215.40px;top:726px;font-size:24.56px;line-height:27px;color:#1a1b25;letter-spacing:1.667px;">643</div>
<div class="t" style="left:1323.00px;top:701px;font-size:14.38px;line-height:16px;color:#414552;letter-spacing:0.564px;">Opened</div>
<div class="t" style="left:1323.00px;top:726px;font-size:24.56px;line-height:27px;color:#1a1b25;letter-spacing:1.767px;">245</div>
<div class="t" style="left:1442.70px;top:701px;font-size:14.38px;line-height:16px;color:#414552;letter-spacing:0.630px;">Clicks</div>
<div class="t" style="left:1442.70px;top:726px;font-size:24.56px;line-height:27px;color:#1a1b25;letter-spacing:0.167px;">109</div>
<div class="r" style="left:1286px;top:698.5px;width:1px;height:57.0px;background:#c6ccd5;"></div>
<div class="r" style="left:1406px;top:698.5px;width:1px;height:57.0px;background:#c6ccd5;"></div>
<div class="r" style="left:1189.2px;top:799.3px;width:339.0999999999999px;height:135.30000000000007px;background:#f6f8fa;border-radius:6px;"></div>
<div class="t" style="left:1215.40px;top:818px;font-size:17.29px;line-height:20px;color:#1a1b25;letter-spacing:0.701px;-webkit-text-stroke:0.45px #1a1b25;">Christmas campaign</div>
<div class="t" style="left:1215.40px;top:862px;font-size:14.38px;line-height:16px;color:#414552;letter-spacing:0.473px;">Sent</div>
<div class="t" style="left:1215.40px;top:887px;font-size:24.56px;line-height:27px;color:#1a1b25;letter-spacing:1.817px;">834</div>
<div class="t" style="left:1323.00px;top:862px;font-size:14.38px;line-height:16px;color:#414552;letter-spacing:0.564px;">Opened</div>
<div class="t" style="left:1323.00px;top:887px;font-size:24.56px;line-height:27px;color:#1a1b25;letter-spacing:1.767px;">546</div>
<div class="t" style="left:1442.70px;top:862px;font-size:14.38px;line-height:16px;color:#414552;letter-spacing:0.630px;">Clicks</div>
<div class="t" style="left:1442.70px;top:887px;font-size:24.56px;line-height:27px;color:#1a1b25;letter-spacing:0.567px;">377</div>
<div class="r" style="left:1286px;top:859.5px;width:1px;height:57.0px;background:#c6ccd5;"></div>
<div class="r" style="left:1406px;top:859.5px;width:1px;height:57.0px;background:#c6ccd5;"></div>
<div class="r" style="left:1165px;top:1003px;width:387px;height:1px;background:#e3e8ee;"></div>
<div class="r" style="left:1165px;top:1090px;width:387px;height:1px;background:#e3e8ee;"></div>
<div class="r" style="left:1378.5px;top:1028.1px;width:149.5999999999999px;height:38.200000000000045px;background:#635bff;border-radius:8px;box-shadow:inset 0 -1px 0 rgba(0,0,0,0.12);"></div>
<div class="t" style="left:1393.40px;top:1037px;font-size:18.75px;line-height:21px;color:#fff;letter-spacing:-0.176px;-webkit-text-stroke:0.7px #fff;">View audience</div>
</body></html>
